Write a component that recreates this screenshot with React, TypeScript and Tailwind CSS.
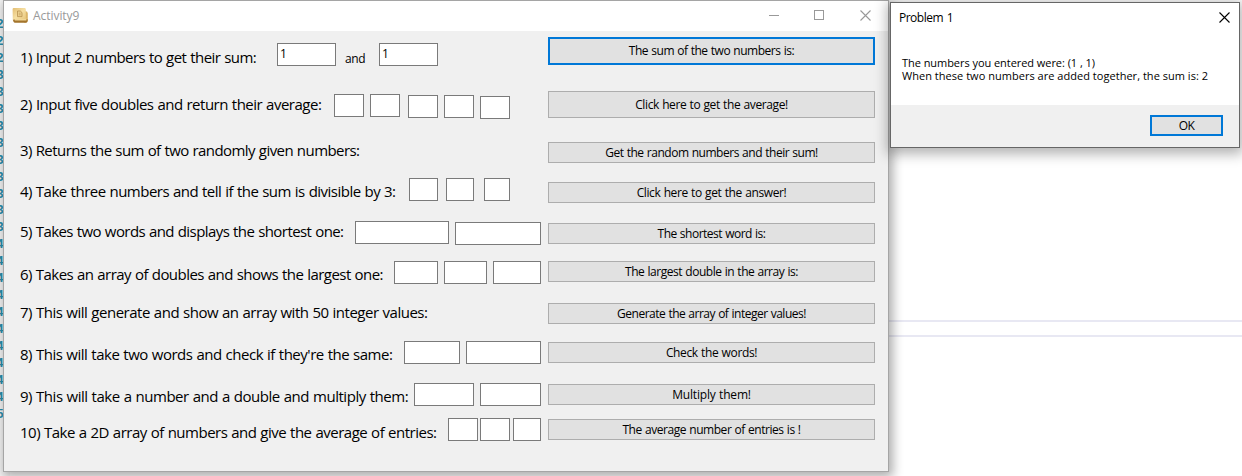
type Row = {
  label: string;
  labelClass: string;
  rowClass: string;
  inputs: { className: string; value?: string }[];
  separator?: string;
  button: string;
  buttonClass: string;
};

const rows: Row[] = [
  {
    label: '1) Input 2 numbers to get their sum:',
    labelClass: 'w-[257px] mt-[10px] tracking-[-0.55px]',
    rowClass: 'h-[54px]',
    inputs: [
      { className: 'w-[59px] mt-[6px]', value: '1' },
      { className: 'w-[59px] mt-[6px]', value: '1' },
    ],
    separator: 'and',
    button: 'The sum of the two numbers is:',
    buttonClass: 'h-[28px] border-2 border-[#0078d7] tracking-[-0.47px]',
  },
  {
    label: '2) Input five doubles and return their average:',
    labelClass: 'w-[314px] mt-[3px] tracking-[-0.5px]',
    rowClass: 'h-[49px]',
    inputs: [
      { className: 'w-[30px] mt-[3px]' },
      { className: 'w-[30px] mt-[3px] ml-[6px]' },
      { className: 'w-[30px] mt-[4px] ml-[8px]' },
      { className: 'w-[30px] mt-[4px] ml-[6px]' },
      { className: 'w-[30px] mt-[5px] ml-[6px]' },
    ],
    button: 'Click here to get the average!',
    buttonClass: 'h-[27px] border border-[#adadad] tracking-[-0.39px]',
  },
  {
    label: '3) Returns the sum of two randomly given numbers:',
    labelClass: 'w-[400px] tracking-[-0.57px]',
    rowClass: 'h-[38px]',
    inputs: [],
    button: 'Get the random numbers and their sum!',
    buttonClass: 'h-[21px] mt-[2px] border border-[#adadad] tracking-[-0.47px]',
  },
  {
    label: '4) Take three numbers and tell if the sum is divisible by 3:',
    labelClass: 'w-[389px] mt-[3px] tracking-[-0.51px]',
    rowClass: 'h-[43px]',
    inputs: [
      { className: 'w-[29px]' },
      { className: 'w-[28px] ml-[8px]' },
      { className: 'w-[26px] ml-[10px]' },
    ],
    button: 'Click here to get the answer!',
    buttonClass: 'h-[21px] mt-[4px] border border-[#adadad] tracking-[-0.38px]',
  },
  {
    label: '5) Takes two words and displays the shortest one:',
    labelClass: 'w-[335px] tracking-[-0.57px]',
    rowClass: 'h-[40px]',
    inputs: [{ className: 'w-[94px]' }, { className: 'w-[86px] mt-px ml-[6px]' }],
    button: 'The shortest word is:',
    buttonClass: 'h-[21px] mt-[2px] border border-[#adadad] tracking-[-0.5px]',
  },
  {
    label: '6) Takes an array of doubles and shows the largest one:',
    labelClass: 'w-[374px] mt-[3px] tracking-[-0.54px]',
    rowClass: 'h-[41px]',
    inputs: [
      { className: 'w-[44px]' },
      { className: 'w-[43px] ml-[6px]' },
      { className: 'w-[48px] ml-[6px]' },
    ],
    button: 'The largest double in the array is:',
    buttonClass: 'h-[21px] border border-[#adadad] tracking-[-0.46px]',
  },
  {
    label: '7) This will generate and show an array with 50 integer values:',
    labelClass: 'w-[420px] tracking-[-0.48px]',
    rowClass: 'h-[39px]',
    inputs: [],
    button: 'Generate the array of integer values!',
    buttonClass: 'h-[21px] mt-px border border-[#adadad] tracking-[-0.5px]',
  },
  {
    label: "8) This will take two words and check if they're the same:",
    labelClass: 'w-[384px] mt-[3px] tracking-[-0.48px]',
    rowClass: 'h-[42px]',
    inputs: [{ className: 'w-[56px]' }, { className: 'w-[75px] ml-[6px]' }],
    button: 'Check the words!',
    buttonClass: 'h-[21px] mt-px border border-[#adadad] tracking-[-0.36px]',
  },
  {
    label: '9) This will take a number and a double and multiply them:',
    labelClass: 'w-[394px] mt-[3px] tracking-[-0.46px]',
    rowClass: 'h-[35px]',
    inputs: [{ className: 'w-[60px]' }, { className: 'w-[61px] ml-[6px]' }],
    button: 'Multiply them!',
    buttonClass: 'h-[21px] mt-px border border-[#adadad] tracking-[-0.18px]',
  },
  {
    label: '10) Take a 2D array of numbers and give the average of entries:',
    labelClass: 'w-[428px] mt-[4px] tracking-[-0.5px]',
    rowClass: 'h-[23px]',
    inputs: [
      { className: 'w-[30px]' },
      { className: 'w-[30px] ml-[2px]' },
      { className: 'w-[28px] ml-[3px]' },
    ],
    button: 'The average number of entries is !',
    buttonClass: 'h-[21px] mt-px border border-[#adadad] tracking-[-0.45px]',
  },
];

const lineNumbers = Array.from({ length: 24 }, (_, i) => 27 + i);

function CloseIcon({ className }: { className: string }) {
  return (
    <svg width="11" height="11" viewBox="0 0 11 11" className={className} stroke="currentColor" fill="none">
      <path d="M0.5 0.5 L10.5 10.5 M10.5 0.5 L0.5 10.5" strokeWidth="1.1" />
    </svg>
  );
}

function AppIcon() {
  return (
    <svg width="17" height="17" viewBox="0 0 17 17" className="ml-2 mt-[6px] shrink-0">
      <defs>
        <linearGradient id="page" x1="0" y1="0" x2="1" y2="1">
          <stop offset="0" stopColor="#e2bd72" />
          <stop offset="0.5" stopColor="#f6dfa2" />
          <stop offset="1" stopColor="#e6c47a" />
        </linearGradient>
      </defs>
      <path d="M12.5 4.6 Q15.6 3.6 15.8 6.5 V14 Q15.6 15.4 14 15.4 H12 Z" fill="#dcb567" />
      <path d="M1 12.2 H15.6 V13.8 Q15.4 15.8 14 15.8 H3 Q1 15.4 1 12.2 Z" fill="#a3742c" />
      <path d="M2.4 11.4 H14.4 V13.4 H2.8 Z" fill="#f1d798" />
      <path d="M0.6 2.2 Q0.6 1 1.8 1 H12.6 Q13.8 1 13.8 2.2 V12 H2.5 Q1 12 0.8 13.6 Z" fill="url(#page)" />
      <path d="M5.5 4 H8.3 L10 5.6 V9.6 H5.5 Z" fill="#ecd08e" stroke="#b8914e" strokeWidth="0.8" />
      <path d="M6.8 6.2 H8.6 M6.8 7.8 H8.6" stroke="#c09a58" strokeWidth="0.7" />
    </svg>
  );
}

function TextField({ className, value }: { className: string; value?: string }) {
  return (
    <div className={`h-[23px] shrink-0 border border-[#7a7a7a] bg-white pl-[2px] text-[12px] leading-[20px] ${className}`}>
      {value}
    </div>
  );
}

function FormRow({ row }: { row: Row }) {
  const [first, ...rest] = row.inputs;
  return (
    <div className={`flex items-start ${row.rowClass}`}>
      <div className="flex w-[528px] shrink-0 items-start">
        <span
          className={`shrink-0 text-[15px] leading-[20px] whitespace-nowrap [word-spacing:0.5px] ${row.labelClass}`}
        >
          {row.label}
        </span>
        {first && <TextField {...first} />}
        {row.separator && (
          <span className="mt-[13px] ml-[9px] w-[34px] text-[12px] leading-[18px] tracking-[-0.4px]">{row.separator}</span>
        )}
        {rest.map((field, i) => (
          <TextField key={i} {...field} />
        ))}
      </div>
      <button
        className={`flex w-[327px] shrink-0 items-center justify-center bg-[#e1e1e1] text-[12px] leading-[16px] whitespace-nowrap [word-spacing:0.5px] ${row.buttonClass}`}
      >
        {row.button}
      </button>
    </div>
  );
}

export default function App() {
  return (
    <div className="relative h-[476px] w-[1242px] overflow-hidden bg-white font-['Open_Sans','Noto_Sans',sans-serif] text-black">
      <div className="flex h-full">
        <div className="w-[10px] bg-[#f8f8f8] pt-[17px] font-['Liberation_Mono',monospace] text-[13px] leading-[16.95px] text-[#2b91af]">
          {lineNumbers.map((n) => (
            <div key={n} className="-ml-[4px] font-bold">
              {n}
            </div>
          ))}
        </div>
        <div className="flex-1 pt-[320px]">
          <div className="h-[17px] border-y-2 border-[#e8e8f3]" />
        </div>
      </div>

      <div className="absolute top-0 left-[3px] flex h-[472px] w-[886px] flex-col border border-[#a5a5a5] bg-[#f0f0f0] shadow-[2px_3px_10px_2px_rgba(0,0,0,0.32)]">
        <div className="flex h-[30px] shrink-0 bg-white text-[#999999]">
          <AppIcon />
          <span className="mt-[6px] ml-[4px] text-[12px] leading-[18px] tracking-[-0.05px]">Activity9</span>
          <div className="mt-[9px] mr-[17px] ml-auto flex">
            <svg width="11" height="11" viewBox="0 0 11 11" stroke="currentColor">
              <path d="M0 5.5 H10" />
            </svg>
            <svg width="11" height="11" viewBox="0 0 11 11" stroke="currentColor" fill="none" className="ml-[34px]">
              <rect x="0.5" y="0.5" width="9" height="9" />
            </svg>
            <CloseIcon className="ml-[35px] text-[#999999]" />
          </div>
        </div>
        <div className="flex flex-col pt-[6px] pl-4">
          {rows.map((row) => (
            <FormRow key={row.label} row={row} />
          ))}
        </div>
      </div>

      <div className="absolute top-[2px] left-[890px] flex h-[146px] w-[350px] flex-col border border-[#666666] bg-white shadow-[0_3px_12px_3px_rgba(0,0,0,0.3)]">
        <div className="flex h-[30px] shrink-0 justify-between pr-[9px] pl-2">
          <span className="mt-[6px] text-[12px] leading-[18px] tracking-[-0.5px] [word-spacing:1px]">Problem 1</span>
          <CloseIcon className="mt-[9px] text-black" />
        </div>
        <div className="flex h-[72px] shrink-0 flex-col pt-[23px] pl-[11px] text-[11px] leading-[13px] whitespace-nowrap">
          <span className="tracking-[-0.05px]">The numbers you entered were: (1 , 1)</span>
          <span className="tracking-[0.03px]">When these two numbers are added together, the sum is: 2</span>
        </div>
        <div className="flex flex-1 items-start justify-end bg-[#f0f0f0] pt-[10px] pr-4">
          <button className="flex h-[21px] w-[73px] items-center justify-center border-2 border-[#0078d7] bg-[#e1e1e1] text-[12px] leading-[16px] tracking-[-0.6px]">
            OK
          </button>
        </div>
      </div>
    </div>
  );
}
